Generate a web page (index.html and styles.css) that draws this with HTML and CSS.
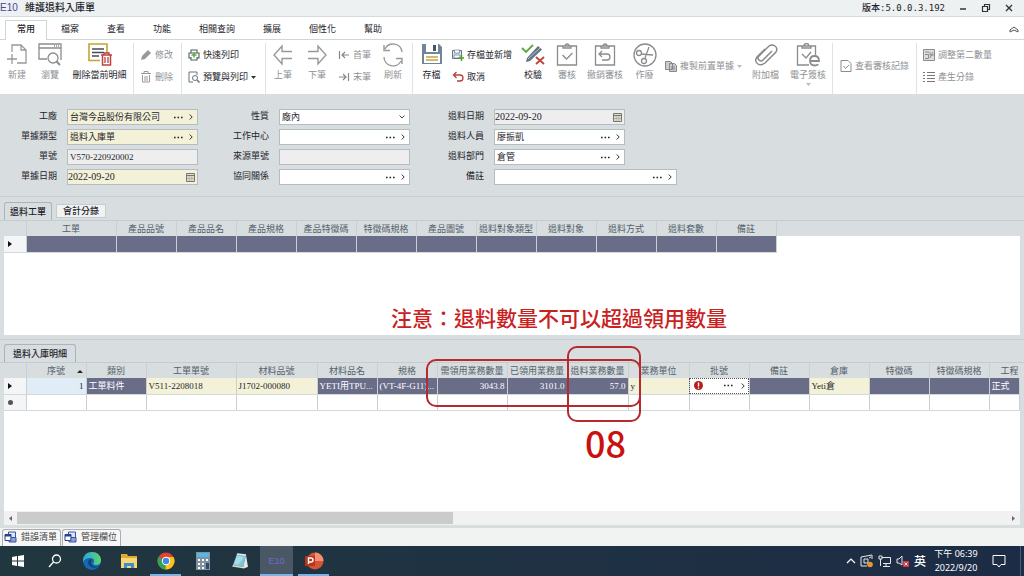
FILE: index.html
```html
<!DOCTYPE html>
<html lang="zh-Hant">
<head>
<meta charset="utf-8">
<title>維護退料入庫單</title>
<link rel="stylesheet" href="styles.css">
</head>
<body>
<svg class="defs" aria-hidden="true">
  <symbol id="dots" viewBox="0 0 9 3"><path d="M0 .7h1.600v1.600H0zM3.500 .7h1.600v1.600H3.500zM7 .7h1.600v1.600H7z" fill="#222"/></symbol>
  <symbol id="next" viewBox="0 0 4 6"><path d="M.7 .5 3.200 3 .7 5.500" fill="none" stroke="#333"/></symbol>
  <symbol id="cal" viewBox="0 0 9 9"><path d="M.5 .5h8v8h-8z" fill="#deded2" stroke="#77776e"/><path d="M.5 2.500h8" stroke="#77776e"/><path d="M3.200 3v5M5.800 3v5M1 5.500h7" stroke="#a5a598" stroke-width=".7"/></symbol>
  <symbol id="win" viewBox="0 0 13 12"><path d="M4.500 1h7v6h-7z" fill="#dce6fa" stroke="#3a55a5"/><path d="M1 3.500h6v6H1z" fill="#fff" stroke="#27408f"/><path d="M1 3.500h6v2H1z" fill="#27408f"/><path d="M7 6.500h5v4.500H5V9.500h2z" fill="#8ba0dc" stroke="#3a55a5"/></symbol>
</svg>

<header class="titlebar">
  <span class="brand">E10</span>
  <h1>維護退料入庫單</h1>
  <span class="version">版本:5.0.0.3.192</span>
  <button class="winbtn" aria-label="最小化"><svg width="10" height="10"><path d="M2 6h6" stroke="#333" stroke-width="1.500"/></svg></button>
  <button class="winbtn" aria-label="還原"><svg width="10" height="10"><path d="M1.500 3.500h5v5h-5zM3.500 3v-1.500h5v5H7" fill="none" stroke="#333" stroke-width="1.200"/></svg></button>
  <button class="winbtn" aria-label="關閉"><svg width="10" height="10"><path d="M2 2l6 6M8 2l-6 6" stroke="#333" stroke-width="1.400"/></svg></button>
</header>

<nav class="menu">
  <button class="menu-tab active">常用</button><button class="menu-tab">檔案</button><button class="menu-tab">查看</button><button class="menu-tab">功能</button><button class="menu-tab">相關查詢</button><button class="menu-tab">擴展</button><button class="menu-tab">個性化</button><button class="menu-tab">幫助</button>
  <button class="collapse" aria-label="收合"><svg width="10" height="8"><path d="M1 4l4-3 4 3v2L5 4 1 6z" fill="none" stroke="#555"/></svg></button>
</nav>

<section class="ribbon">
  <button class="big off"><svg width="24" height="26" fill="none" stroke="#999" stroke-width="1.300"><path d="M7 9V2h9l5 5v13h-9M16 2v5h5M7 11v10M2 16h10"/></svg>新建</button>
  <button class="big off"><svg width="24" height="26" fill="none" stroke="#8c8c8c" stroke-width="1.300"><path d="M9 16H1V1h22v16M1 5h22M16 3h1M18 3h1M20 3h1"/><circle cx="15" cy="15" r="5"/><path d="M18.500 18.500 22 22" stroke-width="2"/></svg>瀏覽</button>
  <button class="big"><svg width="24" height="26" fill="none"><path d="M12 17.500H1V1h18v9" stroke="#c9a22e" stroke-width="1.600"/><path d="M4 6h12M4 9.500h12M4 13h7" stroke="#444b5a" stroke-width="1.500"/><path d="M13 12h11M16 12v-2h5v2M14.500 12v10h8V12" stroke="#b94440" stroke-width="1.500"/><path d="M17 14v6M20 14v6" stroke="#b94440" stroke-width="1.300"/></svg>刪除當前明細</button>
  <div class="pair rule off">
    <button><svg width="12" height="12"><path d="M1 11l1-4 6-6 3 3-6 6z" fill="#999"/></svg>修改</button>
    <button><svg width="12" height="12" fill="none" stroke="#999"><path d="M1 2.500h10M4 2V.5h4V2M2.500 4v7h7V4M5 5v5M7 5v5"/></svg>刪除</button>
  </div>
  <div class="pair rule">
    <button><svg width="12" height="12" fill="none" stroke="#51605a" stroke-width="1.100"><path d="M3 4V1h6v3M3 9H1V4h10v5H9M3 8v3h6V8"/><path d="M6 3.500v5M3.500 6h5" stroke="#5cab45" stroke-width="1.500"/></svg>快速列印</button>
    <button><svg width="12" height="12" fill="none" stroke="#6c7278"><path d="M5 11H1V1h8v3"/><circle cx="7" cy="7" r="2.500"/><path d="M9 9l2.500 2.500" stroke-width="1.500"/></svg>預覽與列印<svg class="caret" width="5" height="3"><path d="M0 0h5L2.500 3z" fill="#333"/></svg></button>
  </div>
  <button class="big rule off"><svg width="24" height="26" fill="none" stroke="#999" stroke-width="1.400"><path d="M21 8.500H11V3L3 12l8 9v-5.500h10"/></svg>上筆</button>
  <button class="big off"><svg width="24" height="26" fill="none" stroke="#999" stroke-width="1.400"><path d="M3 8.500h10V3l8 9-8 9v-5.500H3"/></svg>下筆</button>
  <div class="pair off tight">
    <button><svg width="12" height="12" fill="none" stroke="#888" stroke-width="1.200"><path d="M1.500 2v8M11 6H4M7 3L4 6l3 3"/></svg>首筆</button>
    <button><svg width="12" height="12" fill="none" stroke="#888" stroke-width="1.200"><path d="M10.500 2v8M1 6h7M5 3l3 3-3 3"/></svg>末筆</button>
  </div>
  <button class="big off"><svg width="24" height="26" fill="none" stroke="#999" stroke-width="1.400"><path d="M21 9A9 9 0 0 0 4 6M3 2v5.500h6M3 14a9 9 0 0 0 17 4M21 21v-5.500h-6"/></svg>刷新</button>
  <button class="big rule"><svg width="24" height="26"><path d="M2 1h17l3 3v17H2z" fill="#71859a"/><path d="M6 1h12v8H6zM4 11h16v9H4z" fill="#fff"/><path d="M13 2h3v6h-3z" fill="#43566a"/><path d="M6 14h12M6 17h12" stroke="#c4a53c" stroke-width="1.500"/></svg>存檔</button>
  <div class="pair snug">
    <button><svg width="12" height="12"><path d="M.5 1.500h9v8h-9z" fill="#dce3ea" stroke="#65788c"/><path d="M2.500 1h5v3h-5zM2 6h6v3H2z" fill="#fff" stroke="#65788c" stroke-width=".7"/><path d="M9.500 6v6M6.500 9h6" stroke="#4ba32f" stroke-width="1.500"/></svg>存檔並新增</button>
    <button><svg width="12" height="12" fill="none" stroke="#b5413d" stroke-width="1.300"><path d="M4.500 1L1.500 4l3 3M2 4h6q3 0 3 3t-3 3H5"/></svg>取消</button>
  </div>
  <button class="big"><svg width="24" height="26" fill="none"><path d="M1 5l4 4 7-7" stroke="#62a83f" stroke-width="1.900"/><path d="M5 19l1-4L17 3l4 3.500L9 18z" fill="#637383"/><path d="M7 16L19 5" stroke="#b8c4cd"/><path d="M15 14l8 7M23 14l-8 7" stroke="#bf453f" stroke-width="1.900"/></svg>校驗</button>
  <button class="big off"><svg width="24" height="26" fill="none" stroke="#8c8c8c" stroke-width="1.300"><path d="M2.500 3h19v19h-19zM8 5V3h2a2 2 0 0 1 4 0h2v2zM7.500 12l4 4 6-6"/></svg>審核</button>
  <button class="big off"><svg width="24" height="26" fill="none" stroke="#8c8c8c" stroke-width="1.300"><path d="M2.500 3h19v19h-19zM8 5V3h2a2 2 0 0 1 4 0h2v2zM9 8l-3 3 3 3M6 11h8q3 0 3 3t-3 3H9"/></svg>撤銷審核</button>
  <button class="big off"><svg width="24" height="26" fill="none" stroke="#8c8c8c" stroke-width="1.300"><circle cx="12" cy="12" r="11"/><circle cx="6" cy="10" r="2.500"/><circle cx="11" cy="18" r="2.500"/><path d="M8 11l12 1M12 15l4-11"/></svg>作廢</button>
  <div class="single off"><button><svg width="12" height="12" fill="#ccc" stroke="#888"><path d="M.5 1.500h5l2 2v6h-7zM4.500 3.500h5l2 2v6h-7zM6 7h4M6 9h4"/></svg>複製前置單據<svg class="caret" width="5" height="3"><path d="M0 0h5L2.500 3z" fill="#bbb"/></svg></button></div>
  <button class="big off"><svg width="24" height="26" fill="none" stroke="#888" stroke-width="1.500"><path d="M18 8l-9 9q-2 2-4 0t0-4L15 3q3-2 6 0t1 6L11 20q-4 3-7 1-4-3-1-7l8-8"/></svg>附加檔</button>
  <button class="big off"><svg width="26" height="26" fill="none" stroke="#8c8c8c" stroke-width="1.300"><path d="M14 22H2.500V3h18v9M7 5V3h2a2 2 0 0 1 5 0h2v2zM7 11l4 4 5-6"/><path d="M15.500 18H24q0-5-4.500-5t-4.500 5q0 4.500 5 4.500l3.500-1" stroke-width="1.800"/></svg>電子簽核<svg class="drop" width="5" height="3"><path d="M0 0h5L2.500 3z" fill="#bbb"/></svg></button>
  <div class="single rule wide off"><button><svg width="12" height="12" fill="none" stroke="#8c8c8c"><path d="M1 .5h7l3 3v8H1zM3.500 6l2 2.500L9 5"/></svg>查看審核記錄</button></div>
  <div class="pair rule off">
    <button><svg width="12" height="12" fill="none" stroke="#8c8c8c"><path d="M.5 .5h11v11H.5z" fill="#ddd"/><path d="M2 3h4M2 5.500h3.500v4H2M7 9l3-6M7 3v3h4"/></svg>調整第二數量</button>
    <button><svg width="12" height="12" stroke="#777"><path d="M0 1.500h2M4 1.500h8M0 4.500h2M4 4.500h8M0 7.500h2M4 7.500h8M0 10.500h2M4 10.500h8"/></svg>產生分錄</button>
  </div>
</section>

<form class="form">
  <label for="f1">工廠</label>
  <div class="field key"><input id="f1" value="台灣今品股份有限公司"><button type="button" aria-label="選擇"><svg width="9" height="3"><use href="#dots"/></svg></button><button type="button" aria-label="開啟"><svg width="4" height="6"><use href="#next"/></svg></button></div>
  <label for="f2">性質</label>
  <div class="field"><select id="f2"><option>廠內</option></select></div>
  <label for="f3">退料日期</label>
  <div class="field locked date"><input id="f3" value="2022-09-20" readonly><button type="button" aria-label="日曆"><svg width="9" height="9"><use href="#cal"/></svg></button></div>

  <label for="f4">單據類型</label>
  <div class="field key"><input id="f4" value="退料入庫單"><button type="button" aria-label="選擇"><svg width="9" height="3"><use href="#dots"/></svg></button><button type="button" aria-label="開啟"><svg width="4" height="6"><use href="#next"/></svg></button></div>
  <label for="f5">工作中心</label>
  <div class="field"><input id="f5"><button type="button" aria-label="選擇"><svg width="9" height="3"><use href="#dots"/></svg></button><button type="button" aria-label="開啟"><svg width="4" height="6"><use href="#next"/></svg></button></div>
  <label for="f6">退料人員</label>
  <div class="field"><input id="f6" value="廖振凱"><button type="button" aria-label="選擇"><svg width="9" height="3"><use href="#dots"/></svg></button><button type="button" aria-label="開啟"><svg width="4" height="6"><use href="#next"/></svg></button></div>

  <label for="f7">單號</label>
  <div class="field locked"><input id="f7" value="V570-220920002" readonly></div>
  <label for="f8">來源單號</label>
  <div class="field locked"><input id="f8" readonly></div>
  <label for="f9">退料部門</label>
  <div class="field"><input id="f9" value="倉管"><button type="button" aria-label="選擇"><svg width="9" height="3"><use href="#dots"/></svg></button><button type="button" aria-label="開啟"><svg width="4" height="6"><use href="#next"/></svg></button></div>

  <label for="f10">單據日期</label>
  <div class="field key date"><input id="f10" value="2022-09-20"><button type="button" aria-label="日曆"><svg width="9" height="9"><use href="#cal"/></svg></button></div>
  <label for="f11">協同關係</label>
  <div class="field"><input id="f11"><button type="button" aria-label="選擇"><svg width="9" height="3"><use href="#dots"/></svg></button><button type="button" aria-label="開啟"><svg width="4" height="6"><use href="#next"/></svg></button></div>
  <label for="f12">備註</label>
  <div class="field long"><input id="f12"><button type="button" aria-label="選擇"><svg width="9" height="3"><use href="#dots"/></svg></button><button type="button" aria-label="開啟"><svg width="4" height="6"><use href="#next"/></svg></button></div>
</form>

<div class="tabs"><button class="active">退料工單</button><button>會計分錄</button></div>
<section class="grid orders">
  <table>
    <colgroup><col class="c22"><col class="c90"><col span="11" class="c60"><col></colgroup>
    <thead><tr><th></th><th>工單</th><th>產品品號</th><th>產品品名</th><th>產品規格</th><th>產品特徵碼</th><th>特徵碼規格</th><th>產品圖號</th><th>退料對象類型</th><th>退料對象</th><th>退料方式</th><th>退料套數</th><th>備註</th><th></th></tr></thead>
    <tbody><tr><td class="mark"><svg width="4" height="6"><path d="M0 0l4 3-4 3z" fill="#111"/></svg></td><td class="sel"></td><td class="sel"></td><td class="sel"></td><td class="sel"></td><td class="sel"></td><td class="sel"></td><td class="sel"></td><td class="sel"></td><td class="sel"></td><td class="sel"></td><td class="sel"></td><td class="sel"></td><td class="void"></td></tr></tbody>
  </table>
  <p class="notice">注意：退料數量不可以超過領用數量</p>
</section>

<div class="tabs second"><button class="active">退料入庫明細</button></div>
<section class="grid details">
  <table>
    <colgroup><col class="c22"><col span="2" class="c60"><col class="c90"><col class="c81"><col span="2" class="c60"><col class="c70"><col class="c60"><col span="2" class="c61"><col span="5" class="c60"><col></colgroup>
    <thead><tr><th></th><th class="sorted">序號<svg width="6" height="3"><path d="M0 3l3-3 3 3z" fill="#222"/></svg></th><th>類別</th><th>工單單號</th><th>材料品號</th><th>材料品名</th><th>規格</th><th>需領用業務數量</th><th>已領用業務量</th><th>退料業務數量</th><th>業務單位</th><th>批號</th><th>備註</th><th>倉庫</th><th>特徵碼</th><th>特徵碼規格</th><th class="last">工程</th></tr></thead>
    <tbody>
      <tr><td class="mark"><svg width="4" height="6"><path d="M0 0l4 3-4 3z" fill="#111"/></svg></td><td class="seq num">1</td><td class="sel">工單料件</td><td class="edit">V511-2208018</td><td class="edit">J1702-000080</td><td class="sel">YETI用TPU...</td><td class="sel">(VT-4F-G11)...</td><td class="sel num">3043.8</td><td class="sel num">3101.0</td><td class="sel num">57.0</td><td class="edit">y</td>
      <td class="focus"><div class="lookup"><svg width="9" height="9"><circle cx="4.500" cy="4.500" r="4.500" fill="#b81c1c"/><path d="M4.500 1.500v4M4.500 6.500v1.300" stroke="#fff" stroke-width="1.400"/></svg><button aria-label="選擇"><svg width="9" height="3"><use href="#dots"/></svg></button><button aria-label="開啟"><svg width="4" height="6"><use href="#next"/></svg></button></div></td>
      <td class="sel"></td><td class="edit">Yeti倉</td><td class="sel"></td><td class="sel"></td><td class="sel">正式</td></tr>
      <tr><td class="mark"><svg width="5" height="5"><circle cx="2.500" cy="2.500" r="2.500" fill="#555"/></svg></td><td></td><td></td><td></td><td></td><td></td><td></td><td></td><td></td><td></td><td></td><td></td><td></td><td></td><td></td><td></td><td></td></tr>
    </tbody>
  </table>
  <div class="box quantities"></div>
  <div class="box returned"></div>
  <div class="step">08</div>
  <div class="scroll"><button aria-label="向左"><svg width="3" height="5"><path d="M3 0v5L0 2.500z" fill="#666"/></svg></button><div class="track"><div class="thumb"></div></div><button aria-label="向右"><svg width="3" height="5"><path d="M0 0v5l3-2.500z" fill="#666"/></svg></button></div>
</section>

<div class="dock"><button><svg width="13" height="12"><use href="#win"/></svg>錯誤清單</button><button><svg width="13" height="12"><use href="#win"/></svg>管理欄位</button></div>

<footer class="taskbar">
  <button class="app" aria-label="開始"><svg width="14" height="14" fill="#fff"><path d="M1 3l5-1v4.500H1zM7 2l6-1v5.500H7zM1 7.500h5V12l-5-1zM7 7.500h6V13l-6-1z"/></svg></button>
  <button class="app" aria-label="搜尋"><svg width="14" height="14" fill="none" stroke="#fff" stroke-width="1.300"><circle cx="8.500" cy="5" r="4"/><path d="M5.500 8L1 13"/></svg></button>
  <button class="app" aria-label="Edge"><svg width="20" height="20"><defs><linearGradient id="eg" x1="0" y1="0" x2="1" y2="0"><stop offset="0" stop-color="#2aa7e0"/><stop offset="1" stop-color="#5bd46c"/></linearGradient></defs><circle cx="10" cy="10" r="9" fill="#1667b8"/><path d="M1 9Q2 1 10 1t9 8q0 5-5 5-4 0-2-3 1-4-4-4-5 0-7 4z" fill="url(#eg)"/><path d="M8 8q-3 2-1 6 3 4 9 2 1 0 1-1-5 2-7-1-2-2 0-5z" fill="#14406f"/></svg></button>
  <button class="app" aria-label="檔案總管"><svg width="18" height="16"><path d="M1 1h6l1 2h9v12H1z" fill="#e0a936"/><path d="M1 5h16v10H1z" fill="#f7d774"/><path d="M4 15v-5h10v5h-3v-2H7v2z" fill="#3d8fd0"/></svg></button>
  <button class="app running" aria-label="Chrome"><svg width="18" height="18"><circle cx="9" cy="9" r="8.500" fill="#e34133"/><path d="M9 9L1.600 4.800A8.500 8.500 0 0 0 8.500 17.500z" fill="#35a353"/><path d="M9 9l-.5 8.500A8.500 8.500 0 0 0 16.500 5H9z" fill="#f9c51d"/><circle cx="9" cy="9" r="4.200" fill="#fff"/><circle cx="9" cy="9" r="3.200" fill="#4286f0"/></svg></button>
  <button class="app" aria-label="小算盤"><svg width="14" height="18"><path d="M0 0h14v18H0z" fill="#82919d"/><path d="M1 1h12v4H1z" fill="#50b9e8"/><path d="M2 7h2v2H2zM6 7h2v2H6zM10 7h2v2h-2zM2 11h2v2H2zM6 11h2v2H6zM2 15h2v2H2zM6 15h2v2H6z" fill="#fff"/><path d="M10 11h3v6h-3z" fill="#254c7c"/></svg></button>
  <button class="app" aria-label="記事本"><svg width="18" height="18"><path d="M6 2l9 1-3 12-10-2z" fill="#7fc4da"/><path d="M15 3l2 12-5 .5z" fill="#e3e9ea"/><path d="M6 2l9 1" stroke="#dfe9ec" stroke-width="1.500"/><path d="M2 13l10 2 5-.3-4 1.800L1 14.500z" fill="#e8dfc2"/><path d="M6 4l7 1-6 8-4-1z" fill="#a8dbe8"/></svg></button>
  <button class="app current">E10</button>
  <button class="app running" aria-label="PowerPoint"><svg width="20" height="18"><circle cx="11" cy="9" r="8.500" fill="#d45434"/><path d="M11 .5A8.500 8.500 0 0 1 19.500 9H11z" fill="#f29076"/><path d="M1 4h10v10H1z" fill="#b9351c"/><path d="M4.500 12V6H7q2 0 2 2t-2 2H5" fill="none" stroke="#fff" stroke-width="1.400"/></svg></button>
  <div class="tray">
    <svg width="10" height="14" fill="none" stroke="#fff" stroke-width="1.200"><path d="M1 9l4-4 4 4"/></svg>
    <svg width="14" height="14" fill="none" stroke="#e8e8e8"><path d="M1 3l11-2v4M1 3v9h6M4 5h4v4H4zM9 4l2-1"/><circle cx="10" cy="10.500" r="2.800" fill="#e59a2c" stroke="none"/></svg>
    <svg width="14" height="14" fill="none" stroke="#e8e8e8"><path d="M4 3.500h8.500v6H5M8 10v2M5 12.500h7M1 2h3v3H1zM2.500 5v7"/></svg>
    <svg width="14" height="14" fill="none" stroke="#e8e8e8"><path d="M1 5h2l3-3v9L3 9H1z"/><path d="M7 7h6v6H7z" fill="#cf3543" stroke="none"/><path d="M8.500 8.500l3 3M11.500 8.500l-3 3"/></svg>
    <span class="ime">英</span>
    <time class="clock">下午 06:39<br>2022/9/20</time>
    <svg width="14" height="14" fill="none" stroke="#fff"><path d="M1 1.500h12v9H9l-2 2.500-2-2.500H1z"/></svg>
  </div>
</footer>
</body>
</html>
```

FILE: styles.css
```css
* { box-sizing: border-box; }
html, body { height: 100%; }
body {
  margin: 0;
  display: flex;
  flex-direction: column;
  overflow: hidden;
  background: #d8dddf;
  color: #1e1e2c;
  font: 9px/12px "Liberation Sans", "Noto Sans CJK TC", sans-serif;
}
button, input, select { font: inherit; color: inherit; border: 0; padding: 0; background: none; }
button { white-space: nowrap; }
svg { display: block; flex: none; }
.defs { position: absolute; width: 0; height: 0; }

.titlebar { display: flex; align-items: center; flex: none; height: 16px; padding-right: 4px; background: #edf1f2; }
.brand { width: 25px; font-size: 10px; color: #4c4598; }
.titlebar h1 { flex: 1; margin: 0; font-size: 10px; font-weight: 500; }
.version { margin-right: 6px; font: 500 9px/12px "DejaVu Sans Mono", "Noto Sans CJK TC", monospace; }
.winbtn { display: flex; justify-content: center; width: 23px; }

.menu { display: flex; flex: none; height: 24px; padding: 3px 5px 0; background: #fff; border-top: 1px solid #d5dcde; border-bottom: 1px solid #ccd8d6; }
.menu-tab { height: 18px; padding: 0 14px; }
.menu-tab.active { height: 20px; padding: 0 11px 3px; border: 1px solid #ccd8d6; border-bottom: 0; background: #fff; font-weight: 500; }
.collapse { margin-left: auto; }

.ribbon {
  display: grid;
  grid-template-columns: 34px 32px 67px 48px 84px 35px 34px 40px 38px 38px 64px 38px 30px 46px 33px 86px 37px 48px 84px 1fr;
  flex: none;
  height: 54px;
  padding-top: 3px;
  background: #fff;
}
.big { display: flex; flex-direction: column; align-items: center; }
.off { color: #8f9195; }
.rule { border-left: 1px solid #e0e3e5; }
.drop { margin-top: 2px; }
.pair { display: flex; flex-direction: column; gap: 10px; padding: 6px 0 0 6px; }
.tight { padding-left: 4px; }
.snug { padding-left: 2px; }
.pair button, .single button { display: flex; align-items: center; gap: 3px; height: 12px; }
.single { padding: 17px 0 0 4px; }
.wide { padding-left: 7px; }

.form {
  display: grid;
  grid-template-columns: 57px 131px 61px 131px 64px 131px 1fr;
  grid-auto-rows: 16px;
  gap: 4px 10px;
  flex: none;
  padding: 15px 0 11px;
  border-bottom: 1px solid #c9d0d3;
}
.form label { text-align: right; line-height: 14px; }
.field { display: flex; align-items: center; gap: 6px; padding: 0 4px 0 2px; background: #fff; border: 1px solid #b4bec2; font-family: "Liberation Serif", "Noto Sans CJK TC", serif; }
.form label:nth-of-type(3n+1) { grid-column: 1; }
.field.key { background: #f3f2d8; }
.field.locked { background: #eee; }
.field.long { grid-column: 6 / 8; width: 183px; }
.field input { flex: 1; min-width: 0; height: 12px; outline: 0; }
.field.date { padding: 0 2px 0 0; font-size: 10px; }
.field select {
  flex: 1;
  appearance: none;
  background: url("data:image/svg+xml,%3Csvg xmlns='http://www.w3.org/2000/svg' width='6' height='4'%3E%3Cpath d='M.5 .5 3 3 5.500 .5' fill='none' stroke='%23444'/%3E%3C/svg%3E") no-repeat right center;
}

.tabs { display: flex; align-items: flex-end; gap: 4px; flex: none; height: 24px; padding: 0 4px; border-bottom: 1px solid #c5ccd0; font-weight: 500; }
.tabs button { height: 14px; padding: 0 6px; background: #f1f3f3; border: 1px solid #c5ccd0; margin-bottom: 2px; }
.tabs .active { height: 18px; margin-bottom: 0; padding: 0 5px; background: #d8dddf; border-color: #aab4b9; border-bottom: 0; border-radius: 3px 3px 0 0; }
.tabs.second { margin-top: 4px; border-top: 1px solid #c9d0d3; }
.tabs.second .active { padding: 0 8px; }

.grid { position: relative; margin: 0 4px; background: #fff; }
.orders { flex: none; min-height: 114px; }
.details { flex: 1; display: flex; flex-direction: column; margin-bottom: 3px; }
table { width: 100%; table-layout: fixed; border-collapse: collapse; }
.c22 { width: 22px; } .c60 { width: 60px; } .c61 { width: 61px; } .c70 { width: 70px; } .c81 { width: 81px; } .c90 { width: 90px; }
th, td { padding: 0 2px; overflow: hidden; white-space: nowrap; border-right: 1px solid #c9cfd3; border-bottom: 1px solid #d3d8db; }
th { height: 15px; padding: 0; background: #d8dddf; color: #53616b; font-weight: 400; border-bottom: 0; }
td { height: 16px; font-family: "Liberation Serif", "Noto Sans CJK TC", serif; }
th:last-child { border-right: 0; }
.last { padding-right: 1px; text-align: right; }
.sorted svg { float: right; margin: 5px 3px 0 -9px; }
.mark { padding-left: 4px; background: #f4f5f6; }
.sel { background: #696d88; color: #fff; }
.edit { background: #f3f2d8; }
.seq { background: #e0edf6; }
.void { border: 0; }
.num { text-align: right; }
.focus { padding: 0 4px; outline: 1px dotted #555; outline-offset: -1px; }
.lookup { display: flex; align-items: center; gap: 8px; }
.lookup svg:first-child { margin-right: auto; }
.lookup button svg { margin: 0; }

.notice { position: absolute; left: 387px; top: 81px; margin: 0; color: #c9211e; font: 500 21px/30px "Noto Sans CJK TC", sans-serif; white-space: nowrap; }
.box { position: absolute; border: 2px solid #b52a2e; border-radius: 10px; }
.quantities { left: 422px; top: -4px; width: 215px; height: 48px; }
.returned { left: 563px; top: -17px; width: 74px; height: 76px; }
.step { position: absolute; left: 581px; top: 57px; color: #c9120f; font: 500 36px/44px "Noto Sans CJK TC", sans-serif; }

.scroll { display: flex; height: 14px; margin-top: auto; background: #f1f1f2; }
.scroll button { display: flex; align-items: center; justify-content: center; width: 13px; }
.track { flex: 1; padding: 1px 0; }
.thumb { width: 44%; height: 12px; background: #cbcbcb; }

.dock { display: flex; flex: none; height: 18px; padding: 1px 2px 0; gap: 1px; background: #f1f2f2; color: #444; }
.dock button { display: flex; align-items: center; gap: 4px; padding: 0 3px 2px 1px; background: #f7f7f7; border: 1px solid #a9aeb1; border-bottom: 0; border-radius: 3px 3px 0 0; }

.taskbar { display: flex; flex: none; height: 30px; background: linear-gradient(90deg, #21373f, #1d2c46); color: #fff; }
.app { display: flex; align-items: center; justify-content: center; width: 31px; margin: 0 3px; border-bottom: 2px solid transparent; border-top: 2px solid transparent; }
.app.running { border-bottom-color: #78b4ea; }
.app.current { width: 33px; margin: 0 2px; background: #4a5866; border-top-color: #4a5866; border-bottom-color: #78b4ea; color: #6f69cc; }
.taskbar .app:first-child { margin-left: 2px; }
.tray { display: flex; align-items: center; gap: 4px; margin-left: auto; margin-right: 3px; padding-right: 14px; border-right: 1px solid #4a5970; }
.ime { font: 500 12px/14px "Noto Sans CJK TC", sans-serif; }
.clock { width: 52px; margin-right: 6px; text-align: center; font: 9px/14px "Noto Sans", "Noto Sans CJK TC", sans-serif; }
```
